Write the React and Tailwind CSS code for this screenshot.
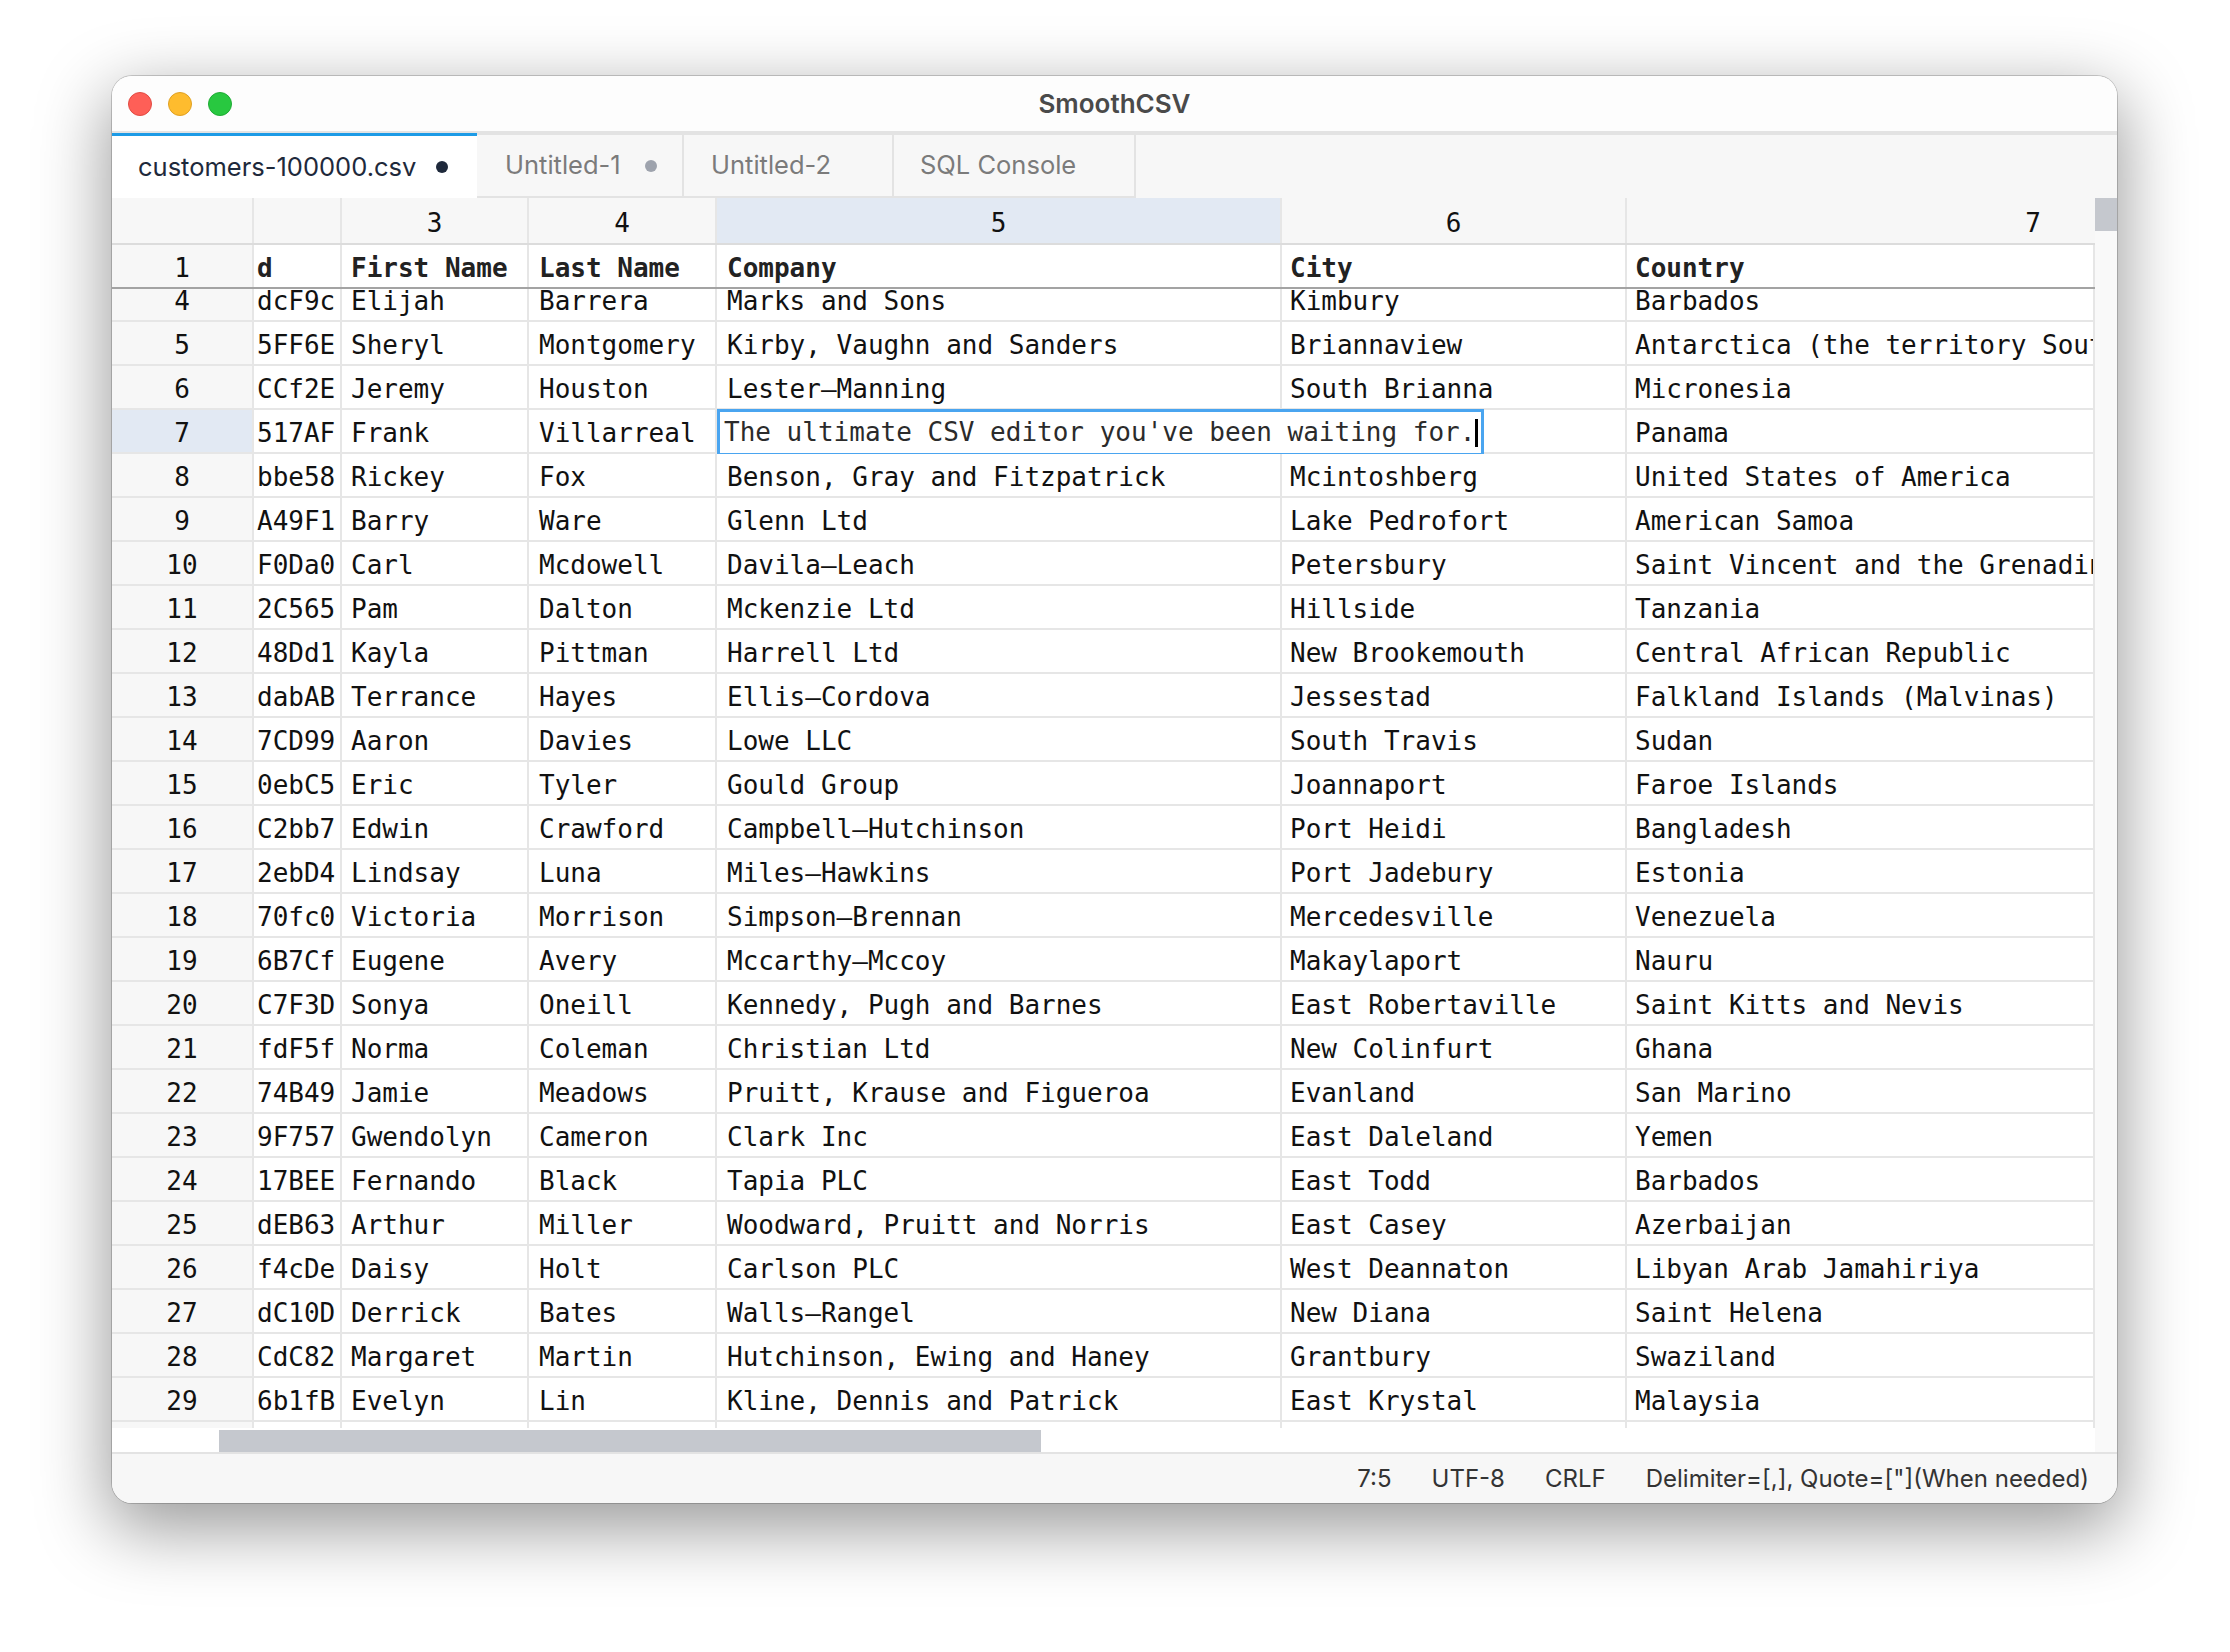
import React from 'react';

const rows = [
  [4, 'dcF9c', 'Elijah', 'Barrera', 'Marks and Sons', 'Kimbury', 'Barbados'],
  [5, '5FF6E', 'Sheryl', 'Montgomery', 'Kirby, Vaughn and Sanders', 'Briannaview', 'Antarctica (the territory South of 60 deg S)'],
  [6, 'CCf2E', 'Jeremy', 'Houston', 'Lester–Manning', 'South Brianna', 'Micronesia'],
  [7, '517AF', 'Frank', 'Villarreal', '', '', 'Panama'],
  [8, 'bbe58', 'Rickey', 'Fox', 'Benson, Gray and Fitzpatrick', 'Mcintoshberg', 'United States of America'],
  [9, 'A49F1', 'Barry', 'Ware', 'Glenn Ltd', 'Lake Pedrofort', 'American Samoa'],
  [10, 'F0Da0', 'Carl', 'Mcdowell', 'Davila–Leach', 'Petersbury', 'Saint Vincent and the Grenadines'],
  [11, '2C565', 'Pam', 'Dalton', 'Mckenzie Ltd', 'Hillside', 'Tanzania'],
  [12, '48Dd1', 'Kayla', 'Pittman', 'Harrell Ltd', 'New Brookemouth', 'Central African Republic'],
  [13, 'dabAB', 'Terrance', 'Hayes', 'Ellis–Cordova', 'Jessestad', 'Falkland Islands (Malvinas)'],
  [14, '7CD99', 'Aaron', 'Davies', 'Lowe LLC', 'South Travis', 'Sudan'],
  [15, '0ebC5', 'Eric', 'Tyler', 'Gould Group', 'Joannaport', 'Faroe Islands'],
  [16, 'C2bb7', 'Edwin', 'Crawford', 'Campbell–Hutchinson', 'Port Heidi', 'Bangladesh'],
  [17, '2ebD4', 'Lindsay', 'Luna', 'Miles–Hawkins', 'Port Jadebury', 'Estonia'],
  [18, '70fc0', 'Victoria', 'Morrison', 'Simpson–Brennan', 'Mercedesville', 'Venezuela'],
  [19, '6B7Cf', 'Eugene', 'Avery', 'Mccarthy–Mccoy', 'Makaylaport', 'Nauru'],
  [20, 'C7F3D', 'Sonya', 'Oneill', 'Kennedy, Pugh and Barnes', 'East Robertaville', 'Saint Kitts and Nevis'],
  [21, 'fdF5f', 'Norma', 'Coleman', 'Christian Ltd', 'New Colinfurt', 'Ghana'],
  [22, '74B49', 'Jamie', 'Meadows', 'Pruitt, Krause and Figueroa', 'Evanland', 'San Marino'],
  [23, '9F757', 'Gwendolyn', 'Cameron', 'Clark Inc', 'East Daleland', 'Yemen'],
  [24, '17BEE', 'Fernando', 'Black', 'Tapia PLC', 'East Todd', 'Barbados'],
  [25, 'dEB63', 'Arthur', 'Miller', 'Woodward, Pruitt and Norris', 'East Casey', 'Azerbaijan'],
  [26, 'f4cDe', 'Daisy', 'Holt', 'Carlson PLC', 'West Deannaton', 'Libyan Arab Jamahiriya'],
  [27, 'dC10D', 'Derrick', 'Bates', 'Walls–Rangel', 'New Diana', 'Saint Helena'],
  [28, 'CdC82', 'Margaret', 'Martin', 'Hutchinson, Ewing and Haney', 'Grantbury', 'Swaziland'],
  [29, '6b1fB', 'Evelyn', 'Lin', 'Kline, Dennis and Patrick', 'East Krystal', 'Malaysia'],
  [30, '', '', '', '', '', ''],
];

// every grid cell: fixed width, right grid line, text nudged a little below centre
const cell = 'h-full flex items-center pt-[5px] border-r-2 border-[#e6e6e6] overflow-hidden whitespace-nowrap shrink-0';

const Row = ({ r }) => {
  const [n, id, first, last, company, city, country] = r;
  const selected = n === 7;
  return (
    <div className="relative flex h-[44px] border-b-2 border-[#e6e6e6] bg-white">
      <div className={`${cell} w-[142px] justify-center ${selected ? 'bg-[#e2e9f3]' : 'bg-[#f7f7f7]'}`}>{n}</div>
      <div className={`${cell} w-[88px] pl-[3px]`}>{id}</div>
      <div className={`${cell} w-[187px] pl-[9px]`}>{first}</div>
      <div className={`${cell} w-[188px] pl-[10px]`}>{last}</div>
      <div className={`${cell} w-[565px] pl-[10px]`}>{company}</div>
      <div className={`${cell} w-[345px] pl-[8px]`}>{city}</div>
      <div className="h-full flex items-center pt-[5px] flex-1 min-w-0 overflow-hidden whitespace-nowrap pl-[8px] border-r-2 border-[#e6e6e6]">{country}</div>
      {selected && (
        <div className="absolute left-[605px] top-[-1px] w-[767px] h-[47px] border-[3px] border-[#4aa5f0] bg-white flex items-center pl-[4px] text-[#2b2b2b]">
          <span>The ultimate CSV editor you've been waiting for.</span>
          <span className="inline-block w-[3px] h-[28px] bg-black"></span>
        </div>
      )}
    </div>
  );
};

export default function App() {
  return (
    <div className="w-[2230px] h-[1652px] bg-white pt-[76px] pl-[112px] font-['Inter','Noto_Sans',sans-serif]">
      <div className="w-[2005px] h-[1427px] rounded-[20px] overflow-hidden bg-white flex flex-col shadow-[0_22px_70px_4px_rgba(0,0,0,0.4),0_0_0_1px_rgba(0,0,0,0.18)]">
        {/* title bar */}
        <div className="h-[57px] shrink-0 grid grid-cols-3 items-center border-b-2 border-[#e3e3e3] bg-[#fdfdfd]">
          <div className="flex items-center gap-[16px] pl-[16px]">
            <span className="w-[24px] h-[24px] rounded-full bg-[#fe5f57] border border-[#e14b43]"></span>
            <span className="w-[24px] h-[24px] rounded-full bg-[#febc2e] border border-[#dfa023]"></span>
            <span className="w-[24px] h-[24px] rounded-full bg-[#28c840] border border-[#1fab34]"></span>
          </div>
          <div className="text-center text-[26px] font-semibold text-[#4a4a4a]">SmoothCSV</div>
          <div></div>
        </div>

        {/* tabs */}
        <div className="h-[65px] shrink-0 flex bg-[#f7f7f7] text-[25.5px]">
          <div className="w-[365px] h-full flex items-center pl-[26px] bg-white border-t-[3px] border-[#1d9be6] text-[#1e293b]">
            <span>customers-100000.csv</span>
            <span className="ml-[20px] w-[12px] h-[12px] rounded-full bg-[#1e293b]"></span>
          </div>
          <div className="w-[207px] h-full flex items-center pl-[28px] border-r-2 border-b-2 border-t-2 border-[#e3e3e3] text-[#7b7b7b]">
            <span>Untitled-1</span>
            <span className="ml-[24px] w-[12px] h-[12px] rounded-full bg-[#9ea3ad]"></span>
          </div>
          <div className="w-[210px] h-full flex items-center pl-[27px] border-r-2 border-b-2 border-t-2 border-[#e3e3e3] text-[#7b7b7b]">
            <span>Untitled-2</span>
          </div>
          <div className="w-[242px] h-full flex items-center pl-[26px] border-r-2 border-b-2 border-t-2 border-[#e3e3e3] text-[#7b7b7b]">
            <span>SQL Console</span>
          </div>
          <div className="flex-1 h-full border-t-2 border-[#e3e3e3]"></div>
        </div>

        {/* grid + scrollbars */}
        <div className="flex-1 min-h-0 flex">
          <div className="flex-1 min-w-0 flex flex-col">
            <div className="flex-1 min-h-0 flex flex-col overflow-hidden font-['DejaVu_Sans_Mono','Liberation_Mono',monospace] text-[26px] text-[#111]">
              {/* column numbers */}
              <div className="flex h-[47px] shrink-0 border-b-2 border-[#dcdcdc] bg-[#f7f7f7]">
                <div className={`${cell} w-[142px]`}></div>
                <div className={`${cell} w-[88px]`}></div>
                <div className={`${cell} w-[187px] justify-center`}>3</div>
                <div className={`${cell} w-[188px] justify-center`}>4</div>
                <div className={`${cell} w-[565px] justify-center bg-[#e2e9f3]`}>5</div>
                <div className={`${cell} w-[345px] justify-center`}>6</div>
                <div className="h-full flex-1 min-w-0 overflow-hidden">
                  <div className="w-[812px] h-full flex items-center justify-center pt-[5px]">7</div>
                </div>
              </div>
              {/* header row */}
              <div className="flex h-[44px] shrink-0 border-b-2 border-[#a3a3a3] bg-white font-bold text-[#222]">
                <div className={`${cell} w-[142px] justify-center bg-[#f7f7f7] font-normal text-[#111]`}>1</div>
                <div className={`${cell} w-[88px] pl-[3px]`}>d</div>
                <div className={`${cell} w-[187px] pl-[9px]`}>First Name</div>
                <div className={`${cell} w-[188px] pl-[10px]`}>Last Name</div>
                <div className={`${cell} w-[565px] pl-[10px]`}>Company</div>
                <div className={`${cell} w-[345px] pl-[8px]`}>City</div>
                <div className="h-full flex items-center pt-[5px] flex-1 min-w-0 overflow-hidden pl-[8px] border-r-2 border-[#e6e6e6]">Country</div>
              </div>
              {/* body, scrolled so that row 4 is partly under the header */}
              <div className="flex-1 min-h-0 overflow-hidden">
                <div className="mt-[-11px]">
                  {rows.map((r) => (
                    <Row key={r[0]} r={r} />
                  ))}
                </div>
              </div>
            </div>
            {/* horizontal scrollbar */}
            <div className="h-[24px] shrink-0 bg-white flex items-end pl-[107px]">
              <div className="w-[822px] h-[22px] bg-[#c5c8ce]"></div>
            </div>
          </div>
          {/* vertical scrollbar */}
          <div className="w-[22px] shrink-0 bg-[#f9f9f9]">
            <div className="h-[33px] bg-[#c5c8ce]"></div>
          </div>
        </div>

        {/* status bar */}
        <div className="h-[51px] shrink-0 flex items-center justify-end gap-[40px] pr-[28px] border-t-2 border-[#e3e3e3] bg-[#f7f7f7] text-[24px] text-[#333]">
          <span>7:5</span>
          <span>UTF-8</span>
          <span>CRLF</span>
          <span>Delimiter=[,], Quote=["](When needed)</span>
        </div>
      </div>
    </div>
  );
}
